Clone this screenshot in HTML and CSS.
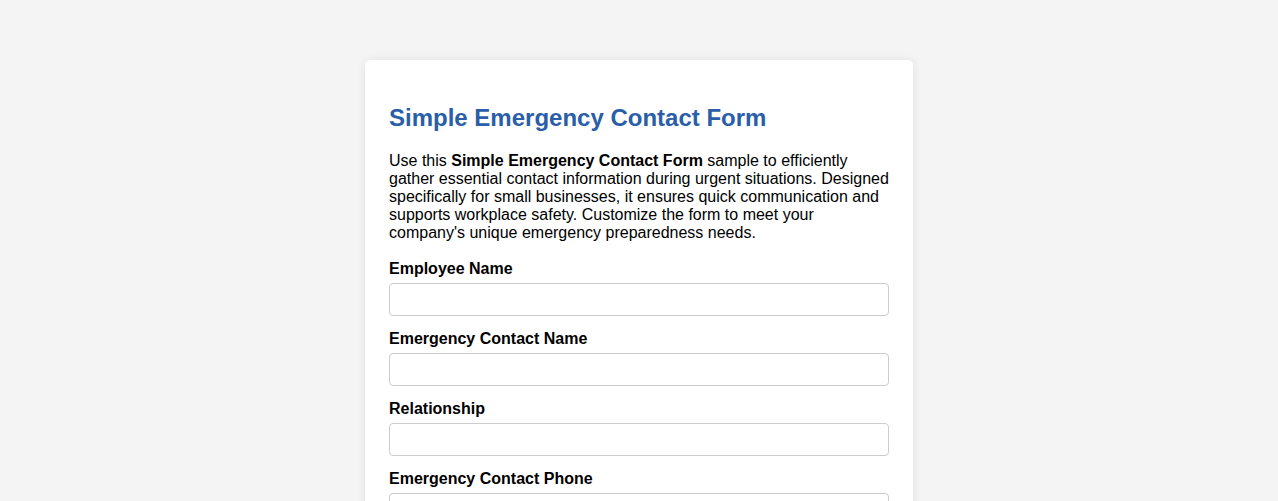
FILE: index.html
```html
<!DOCTYPE html>
<html lang="en">
<head>
<meta charset="utf-8">
<title>Simple Emergency Contact Form</title>
<link rel="stylesheet" href="styles.css">
</head>
<body>
<div class="card">
  <h2 class="title">Simple Emergency Contact Form</h2>
  <p class="intro">Use this <strong>Simple Emergency Contact Form</strong> sample to efficiently gather essential contact information during urgent situations. Designed specifically for small businesses, it ensures quick communication and supports workplace safety. Customize the form to meet your company's unique emergency preparedness needs.</p>
  <form class="form">
    <div class="field">
      <label class="label" for="emp">Employee Name</label>
      <input class="input" id="emp" type="text">
    </div>
    <div class="field">
      <label class="label" for="ecn">Emergency Contact Name</label>
      <input class="input" id="ecn" type="text">
    </div>
    <div class="field">
      <label class="label" for="rel">Relationship</label>
      <input class="input" id="rel" type="text">
    </div>
    <div class="field">
      <label class="label" for="ecp">Emergency Contact Phone</label>
      <input class="input" id="ecp" type="tel">
    </div>
  </form>
</div>
</body>
</html>
```

FILE: styles.css
```css
html, body {
  margin: 0;
  padding: 0;
}
body {
  background: #f4f4f4;
  font-family: "Liberation Sans", Arial, sans-serif;
  font-size: 16px;
  color: #000;
}
.card {
  width: 500px;
  margin: 60px auto;
  padding: 24px;
  background: #fff;
  border-radius: 5px;
  box-shadow: 0 0 10px rgba(0, 0, 0, 0.08);
}
.title {
  font-size: 24px;
  font-weight: bold;
  color: #2a5ea8;
  margin: 20px 0;
}
.intro {
  margin: 0 0 18px;
}
.form {
  margin: 0;
}
.field {
  margin-bottom: 14px;
}
.label {
  display: block;
  font-weight: bold;
  margin-bottom: 5px;
}
.input {
  display: block;
  box-sizing: border-box;
  width: 100%;
  height: 33px;
  padding: 8px;
  border: 1px solid #ccc;
  border-radius: 4px;
  font-family: inherit;
  font-size: 14px;
  background: #fff;
}
```
